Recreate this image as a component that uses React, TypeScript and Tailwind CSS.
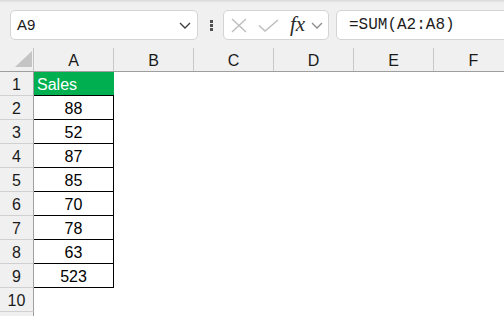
import React from "react";

const columns = ["A", "B", "C", "D", "E", "F"];
const values = ["88", "52", "87", "85", "70", "78", "63", "523"];

function Chevron({ className }: { className: string }) {
  return (
    <svg width="12" height="7" viewBox="0 0 12 7" className={className} fill="none">
      <path d="M1 1 L6 6 L11 1" stroke="currentColor" strokeWidth="1.3" />
    </svg>
  );
}

function FormulaBar() {
  return (
    <div className="h-[48px] bg-[#f0f0f0] flex flex-col">
      <div className="h-[3px] bg-gradient-to-b from-[#d9d9d9] to-[#f0f0f0]" />
      <div className="flex items-start pl-[10px] pt-[7px]">
        <div className="w-[188px] h-[30px] shrink-0 bg-white border border-[#d4d4d4] rounded-[5px] flex items-center justify-between pl-[6px] pr-[6px]">
          <span className="text-[15px] text-[#1a1a1a]">A9</span>
          <Chevron className="text-[#3c3c3c]" />
        </div>
        <div className="ml-[12px] mt-[10px] w-[3px] flex flex-col gap-[1.5px]">
          <div className="w-[3px] h-[2.5px] bg-[#505050]" />
          <div className="w-[3px] h-[2.5px] bg-[#505050]" />
          <div className="w-[3px] h-[2.5px] bg-[#505050]" />
        </div>
        <div className="ml-[10px] w-[106px] h-[30px] shrink-0 bg-white border border-[#d4d4d4] rounded-[5px] flex items-center pl-[7px]">
          <svg width="16" height="15" viewBox="0 0 16 15" fill="none">
            <path d="M1 1 L15 14 M15 1 L1 14" stroke="#bdbdbd" strokeWidth="1.4" />
          </svg>
          <svg width="21" height="13" viewBox="0 0 21 13" fill="none" className="ml-[11px]">
            <path d="M1 6.5 L7 12 L20 1" stroke="#bdbdbd" strokeWidth="1.4" />
          </svg>
          <span className="ml-[11px] font-['Liberation_Serif'] italic text-[21px] leading-[20px] text-[#2a2a2a] -mt-[3px]">fx</span>
          <Chevron className="ml-[6px] text-[#8a8a8a]" />
        </div>
        <div className="ml-[7px] w-[200px] h-[30px] shrink-0 bg-white border border-[#d4d4d4] rounded-[5px] flex items-center pl-[12px]">
          <span className="font-['Liberation_Mono'] text-[16px] text-[#1e1e1e]">=SUM(A2:A8)</span>
        </div>
      </div>
    </div>
  );
}

function HeaderRow() {
  return (
    <div className="flex h-[24px] border-b border-[#9e9e9e] bg-[#f0f0f0]">
      <div className="w-[34px] shrink-0 border-r border-[#c4c4c4] flex items-end justify-end pr-[1px] pb-[4px]">
        <svg width="17" height="16" viewBox="0 0 17 16">
          <polygon points="17,0 17,16 0,16" fill="#c4c4c4" />
        </svg>
      </div>
      {columns.map((c) => (
        <div
          key={c}
          className="w-[80px] shrink-0 border-r border-[#c8c8c8] text-center text-[16px] leading-[21px] pt-[2px] text-[#1a1a1a]"
        >
          {c}
        </div>
      ))}
    </div>
  );
}

export default function App() {
  const rows = Array.from({ length: 11 }, (_, i) => i + 1);
  return (
    <div className="w-[504px] h-[316px] overflow-hidden bg-white font-['Liberation_Sans',sans-serif]">
      <FormulaBar />
      <div className="w-[520px]">
        <HeaderRow />
        {rows.map((r) => {
          let cell = <div className="w-[80px] shrink-0" />;
          if (r === 1) {
            cell = (
              <div className="w-[80px] shrink-0 bg-[#00b050] border-b border-black text-white text-[16px] leading-[21px] pt-[2px] pl-[3px]">
                Sales
              </div>
            );
          } else if (r <= 9) {
            cell = (
              <div className="w-[80px] shrink-0 border-r border-b border-black text-center text-[16px] leading-[21px] pt-[2px] text-black">
                {values[r - 2]}
              </div>
            );
          }
          return (
            <div key={r} className="flex h-[24px]">
              <div className="w-[34px] shrink-0 bg-[#f0f0f0] border-r border-r-[#a0a0a0] border-b border-b-[#d0d0d0] text-center text-[16px] leading-[21px] pt-[2px] text-[#1a1a1a]">
                {r <= 10 ? r : ""}
              </div>
              {cell}
            </div>
          );
        })}
      </div>
    </div>
  );
}
